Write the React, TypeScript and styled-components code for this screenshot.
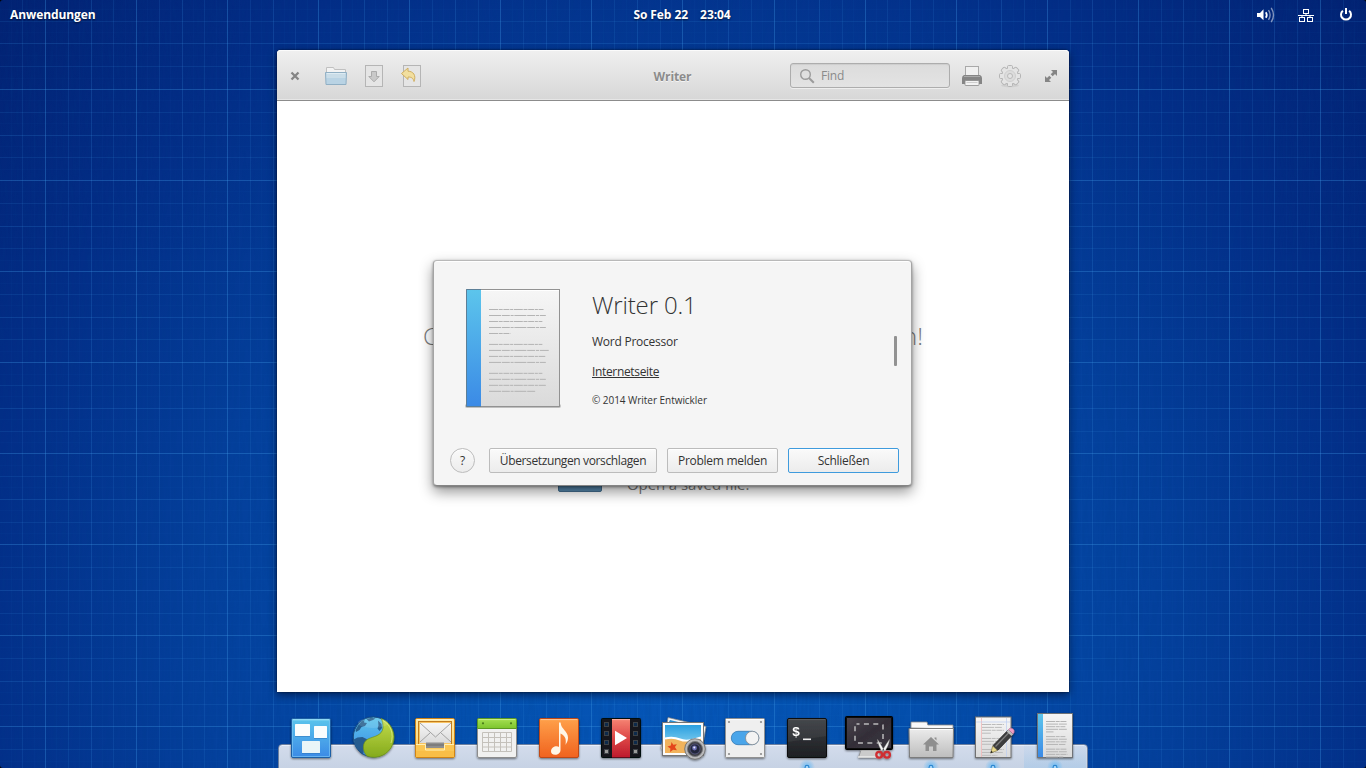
import React from 'react';
import styled, { createGlobalStyle } from 'styled-components';

const GlobalStyle = createGlobalStyle`
  * { box-sizing: border-box; }
  html, body { margin: 0; background: #000; }
  body { font-family: "Open Sans", "Noto Sans", sans-serif; font-size: 12px; overflow: hidden; }
  svg { display: block; flex: none; }
`;

/* ---------- Desktop ---------- */

const GRID = 91.07;

const Desktop = styled.main`
  display: flex;
  flex-direction: column;
  width: 1366px;
  height: 768px;
  position: relative;
  overflow: hidden;
  border-radius: 3px;
  background: radial-gradient(ellipse 820px 860px at 683px 660px, #0657ba 0%, #0450ae 25%, #043f9b 60%, #032d86 88%, #02206f 118%, #001560 145%);
`;

const Wallpaper = styled.svg`
  position: absolute;
  inset: 0;
`;

const Panel = styled.header`
  position: relative;
  display: grid;
  grid-template-columns: 1fr auto 1fr;
  align-items: center;
  height: 30px;
  padding: 0 12px 0 10px;
  color: #fff;
  font-weight: 700;
  line-height: 30px;
  text-shadow: 0 1px 2px rgba(0, 0, 0, 0.6);
`;

const PanelText = styled.span<{ $track?: number }>`
  letter-spacing: ${(p) => p.$track ?? 0}px;
  white-space: pre;
`;

const Indicators = styled.div`
  display: flex;
  justify-content: flex-end;
  gap: 24px;
  & > :first-child { margin-right: -2px; }
`;

function Grid() {
  const lines: React.ReactElement[] = [];
  const step = GRID / 8;
  const strength = (n: number) => {
    const m = ((n % 8) + 8) % 8;
    if (m === 0) return 0.33;
    if (m === 4) return 0.19;
    if (m % 2 === 0) return 0.13;
    return 0.035;
  };
  for (let n = -4; n < 120; n++) {
    const x = 45.5 + n * step;
    if (x > 1366) break;
    lines.push(<rect key={`v${n}`} x={Math.round(x - 0.5)} y="0" width="1" height="768" fill="#3f9be8" opacity={strength(n)} />);
  }
  for (let n = -8; n < 70; n++) {
    const y = 89.5 + n * step;
    if (y > 768) break;
    lines.push(<rect key={`h${n}`} x="0" y={Math.round(y - 0.5)} width="1366" height="1" fill="#3f9be8" opacity={strength(n)} />);
  }
  return (
    <Wallpaper width="1366" height="768">
      <filter id="weave" x="0" y="0" width="100%" height="100%">
        <feTurbulence type="fractalNoise" baseFrequency="0.35 0.04" numOctaves="2" seed="4" />
        <feColorMatrix values="0 0 0 0 0  0 0 0 0 0.05  0 0 0 0 0.25  0.9 0 0 0 -0.36" />
      </filter>
      <rect width="1366" height="768" filter="url(#weave)" opacity="0.35" />
      {lines}
    </Wallpaper>
  );
}

/* ---------- Writer window ---------- */

const Window = styled.section`
  position: relative;
  width: 792px;
  height: 642px;
  margin: 20px 0 0 277px;
  display: flex;
  flex-direction: column;
  background: #fff;
  border-radius: 4px 4px 0 0;
  box-shadow: 0 0 2px rgba(0, 0, 0, 0.7), 0 3px 8px rgba(0, 0, 20, 0.55);
`;

const Toolbar = styled.div`
  display: flex;
  align-items: center;
  height: 51px;
  flex: none;
  padding: 2px 11px 0 13px;
  border-bottom: 1px solid #8c8c8c;
  border-radius: 4px 4px 0 0;
  background: linear-gradient(#f0f0f0, #d7d7d7);
  box-shadow: inset 0 1px #fbfbfb, inset 0 -1px #e6e6e6;
`;

const ToolGroup = styled.div<{ $gap: number; $left?: number }>`
  display: flex;
  align-items: center;
  gap: ${(p) => p.$gap}px;
  margin-left: ${(p) => p.$left ?? 0}px;
`;

const WindowTitle = styled.h1`
  flex: 1;
  margin: 0;
  padding-left: 133px;
  text-align: center;
  font-size: 12px;
  font-weight: 700;
  letter-spacing: -0.1px;
  color: #8b8b8b;
  text-shadow: 0 1px #f4f4f4;
`;

const SearchBox = styled.div`
  display: flex;
  align-items: center;
  gap: 6px;
  width: 160px;
  height: 25px;
  margin-bottom: 1px;
  padding-left: 8px;
  border: 1px solid #adadad;
  border-radius: 3px;
  background: linear-gradient(#dcdcdc, #e3e3e3);
  box-shadow: inset 0 1px 1px rgba(0, 0, 0, 0.07), 0 1px rgba(255, 255, 255, 0.5);
  color: #8a8a8a;
  letter-spacing: -0.2px;
`;

const Document = styled.div`
  flex: 1;
  display: flex;
  flex-direction: column;
  color: #7a7a7a;
`;

const Welcome = styled.h2`
  display: flex;
  justify-content: space-between;
  width: 500px;
  margin: 218px 0 0 146px;
  font-size: 24px;
  font-weight: 300;
  line-height: 33px;
`;

const WelcomeRow = styled.div`
  display: flex;
  align-items: flex-end;
  gap: 25px;
  margin: 91px 0 0 281px;
  height: 50px;
  font-size: 15px;
  line-height: 18px;
  letter-spacing: -0.1px;
`;

const WelcomeFolder = styled.span`
  width: 44px;
  height: 40px;
  margin-bottom: 1px;
  border: 1px solid #456f90;
  border-radius: 2px;
  background: #5689ae;
`;

/* ---------- About dialog ---------- */

const Dialog = styled.section`
  position: absolute;
  left: 433px;
  top: 260px;
  width: 479px;
  height: 226px;
  display: flex;
  flex-direction: column;
  background: #f5f5f5;
  border: 1px solid #a6a6a6;
  border-color: #b9b9b9 #a4a4a4 #858585;
  border-radius: 4px;
  box-shadow: inset 0 1px #fff, 0 1px 3px rgba(0, 0, 0, 0.4), 0 6px 14px rgba(0, 0, 0, 0.42);
  color: #333;
`;

const DialogBody = styled.div`
  display: flex;
  flex: 1;
  padding: 25px 14px 0 28px;
`;

const AppInfo = styled.div`
  display: flex;
  flex-direction: column;
  align-items: flex-start;
  flex: 1;
  margin-left: 27px;
`;

const AppName = styled.h2`
  margin: 2px 0 0;
  font-size: 24px;
  font-weight: 300;
  line-height: 34px;
  letter-spacing: -0.15px;
`;

const InfoLine = styled.span<{ $top: number; $small?: boolean; $link?: boolean }>`
  margin-top: ${(p) => p.$top}px;
  font-size: ${(p) => (p.$small ? 10 : 12)}px;
  line-height: 16px;
  letter-spacing: ${(p) => (p.$small ? -0.04 : p.$link ? -0.34 : -0.24)}px;
  text-decoration: ${(p) => (p.$link ? 'underline' : 'none')};
`;

const ScrollThumb = styled.span`
  width: 3px;
  height: 30px;
  margin-top: 50px;
  border-radius: 1px;
  background: #929292;
`;

const DialogActions = styled.footer`
  display: flex;
  align-items: center;
  gap: 10px;
  height: 25px;
  margin: 0 12px 12px 16px;
`;

const Button = styled.button<{ $w: number; $primary?: boolean; $round?: boolean; $track?: number }>`
  width: ${(p) => p.$w}px;
  height: 25px;
  padding: 0 0 1px;
  margin-right: ${(p) => (p.$round ? 4 : 0)}px;
  border: 1px solid ${(p) => (p.$primary ? '#3f9bdd' : '#bcbcbc')};
  border-radius: ${(p) => (p.$round ? '50%' : '2px')};
  background: linear-gradient(#fafafa, #ececec);
  box-shadow: inset 0 1px #fff;
  color: #333;
  font: inherit;
  font-size: 12px;
  letter-spacing: ${(p) => p.$track ?? -0.28}px;
  white-space: nowrap;
`;

/* ---------- Dock ---------- */

const Dock = styled.nav`
  position: relative;
  display: flex;
  width: 808px;
  height: 60px;
  margin: 16px 0 0 279px;
  padding: 0 1px;
  &::before {
    content: '';
    position: absolute;
    inset: 36px -1px -4px;
    border: 1px solid #6c7f9f;
    border-radius: 4px 4px 0 0;
    background: linear-gradient(#d3dcec, #c5d1e3);
    box-shadow: inset 0 1px #e9effa;
  }
`;

const DockItem = styled.div<{ $active?: boolean }>`
  position: relative;
  width: 62px;
  height: 60px;
  background: ${(p) => (p.$active ? 'linear-gradient(rgba(160,200,240,.1), rgba(150,195,235,.4)) 0 37px / 100% 23px no-repeat' : 'none')};
`;

/* ---------- Icons ---------- */

const HiddenDefs = styled.svg`
  position: absolute;
`;

const Defs = () => (
  <HiddenDefs width="0" height="0">
    <defs>
      <linearGradient id="gBlue" x2="0" y2="1"><stop stopColor="#5cc5ec" /><stop offset="1" stopColor="#3b8ae6" /></linearGradient>
      <linearGradient id="gPaper" x2="0" y2="1"><stop stopColor="#f6f6f6" /><stop offset="1" stopColor="#dadada" /></linearGradient>
      <linearGradient id="gGold" x2="0" y2="1"><stop stopColor="#ffe9a3" /><stop offset=".5" stopColor="#ffe08a" /><stop offset="1" stopColor="#f8b93b" /></linearGradient>
      <linearGradient id="gOrange" x2="0" y2="1"><stop stopColor="#ffa14a" /><stop offset="1" stopColor="#f0621f" /></linearGradient>
      <linearGradient id="gRed" x2="0" y2="1"><stop stopColor="#f58373" /><stop offset=".5" stopColor="#dd4646" /><stop offset="1" stopColor="#bd1a2c" /></linearGradient>
      <linearGradient id="gGreen" x2="0" y2="1"><stop stopColor="#a5e052" /><stop offset="1" stopColor="#7dc52f" /></linearGradient>
      <linearGradient id="gLeaf" x2="0" y2="1"><stop stopColor="#c3dc4a" /><stop offset="1" stopColor="#84aa1c" /></linearGradient>
      <linearGradient id="gDark" x2="0" y2="1"><stop stopColor="#3a3d42" /><stop offset="1" stopColor="#1e2023" /></linearGradient>
      <linearGradient id="gSky" x2="0" y2="1"><stop stopColor="#2a9fe0" /><stop offset="1" stopColor="#a7e2f5" /></linearGradient>
      <linearGradient id="gGray" x2="0" y2="1"><stop stopColor="#ececec" /><stop offset="1" stopColor="#bdbdbd" /></linearGradient>
      <linearGradient id="gScreen" x2="1" y2="1"><stop stopColor="#4a444d" /><stop offset=".5" stopColor="#332e38" /><stop offset="1" stopColor="#3b3640" /></linearGradient>
      <radialGradient id="gGlow"><stop stopColor="#5fb7f5" stopOpacity=".9" /><stop offset="1" stopColor="#5fb7f5" stopOpacity="0" /></radialGradient>
      <filter id="soft" x="-30%" y="-30%" width="160%" height="160%"><feDropShadow dx="0" dy="1" stdDeviation="1" floodOpacity=".5" /></filter>
    </defs>
  </HiddenDefs>
);

const TextRows = ({ x, y, w, step, sw, groups, color = '#aaa' }: { x: number; y: number; w: number; step: number; sw: number; groups: number[][]; color?: string }) => {
  let cy = y;
  const out: React.ReactElement[] = [];
  groups.forEach((g, gi) => {
    g.forEach((f, i) => {
      out.push(<line key={`${gi}-${i}`} x1={x} x2={x + w * f} y1={cy} y2={cy} stroke={color} strokeWidth={sw} strokeDasharray={i % 2 ? '12 .8 8 .8 3 .8' : '9 .7 4 .7 6 .7 3 .7'} />);
      cy += step;
    });
    cy += step * 0.82;
  });
  return <g>{out}</g>;
};

const dockArt: React.ReactElement[] = [
  <g key="tiles">
    <rect x="11.5" y="10.5" width="39" height="39" rx="1.5" fill="url(#gBlue)" stroke="#1f5ea5" />
    <path d="M12.5 11.8h37" stroke="#a5e3fa" />
    <path d="M12.500 12v36.500h37V12" fill="none" stroke="#79c4f4" strokeWidth=".7" />
    <g fill="#2c73b8" opacity=".5"><rect x="15" y="17" width="15" height="12" /><rect x="34" y="19" width="13" height="12" /><rect x="22" y="34" width="18" height="12" /></g>
    <g fill="#fbfdfd"><rect x="15" y="16" width="15" height="12" rx=".6" /><rect x="34" y="18" width="13" height="12" rx=".6" /><rect x="22" y="33" width="18" height="12" rx=".6" fill="#e9f5f8" /></g>
  </g>,
  <g key="globe">
    <circle cx="31.300" cy="29" r="20" fill="url(#gBlue)" stroke="#1c4d80" />
    <path d="M13.500 22q2-5 6-8.500l3-1.500-.5 2.500 3 .5-2 3-3.500 1-2 3-3.500 2zM24.500 11l5-1.200 4 .8-2.500 1.500-4 1.500zM15.500 29.500l5-.5 5 2.500 1 3-4.500 4.500-.5 6-1 1.500Q13.500 41 11.800 31.500zM36 12.500l3.500 3.500.5 4-2.500 3-2-2.500 1-3z" fill="#21507f" opacity=".85" />
    <path d="M39 10.500A20 20 0 0 1 25 48C20 43 20 34 26 31c5-2.500 14-3 15-11 .2-4-.5-7-2-9.500z" fill="url(#gLeaf)" stroke="#6d8f17" strokeWidth=".7" />
    <path d="M41 12.500C49 17 52 26 49 35" fill="none" stroke="#dcec82" strokeWidth=".8" />
    <ellipse cx="31" cy="15" rx="15" ry="5" fill="#fff" opacity=".12" />
  </g>,
  <g key="mail">
    <rect x="11.500" y="10.500" width="39" height="39" rx="1.500" fill="url(#gGold)" stroke="#cf8419" />
    <path d="M12.500 11.700h37" stroke="#fff4cb" />
    <rect x="14.500" y="13.500" width="33" height="23" fill="#f7c463" stroke="#c27c1c" />
    <rect x="16" y="15" width="31" height="20" fill="url(#gPaper)" />
    <path d="M16 15l15.500 14L47 15M16 34l10-9M47 34l-10-9" fill="none" stroke="#9b9b9b" strokeWidth=".9" />
    <path d="M12 36h10v5h18v-5h10v13H12z" fill="#fbc653" />
    <path d="M12 36.500h9.500v5.500h19v-5.500H50" fill="none" stroke="#fff0b5" />
    <path d="M12 43h38v6H12z" fill="#f8b63b" opacity=".5" />
    <rect x="22" y="34.500" width="18" height="5.500" fill="#8e8e8e" /><path d="M22 37h18" stroke="#6c6c6c" />
  </g>,
  <g key="calendar">
    <rect x="11.500" y="10.500" width="39" height="39" rx="1.500" fill="#f1f1f0" stroke="#8d8d8d" />
    <path d="M11.500 20.500V12q0-1.500 1.500-1.500h36q1.500 0 1.500 1.500v8.500z" fill="url(#gGreen)" stroke="#5c9a21" />
    <path d="M12.500 11.600h37" stroke="#c9f08d" />
    <circle cx="17" cy="15.300" r="1.100" fill="#4a7d19" /><circle cx="45" cy="15.300" r="1.100" fill="#4a7d19" />
    <path d="M16.500 24.500h29v19h-29zM16.500 29.500h29M16.500 34.500h29M16.500 39h29M22.500 24.500v19M28.500 24.500v19M34.500 24.500v19M40.500 24.500v19" fill="none" stroke="#c4c1bb" />
  </g>,
  <g key="music">
    <rect x="11.500" y="10.500" width="39" height="39" rx="1.500" fill="url(#gOrange)" stroke="#bf4a14" />
    <path d="M12.500 11.600h37" stroke="#ffc795" />
    <path d="M31 14.500h1.600c.5 7 7.400 8.500 7.400 15 0 4-1.500 5.500-2.500 7.500.8-5 .5-9-5-11.500V42c0 3-2.500 4.800-5.300 4.800s-4.400-1.600-4.200-3.800c.2-2.800 3-4.800 5.500-4.800 1.200 0 2 .3 2.500.7z" fill="#fff6e6" />
  </g>,
  <g key="video">
    <rect x="11.500" y="10.500" width="39" height="39" rx="1" fill="#17191b" stroke="#060708" />
    <rect x="22" y="11" width="18" height="38.500" fill="url(#gRed)" />
    <path d="M22 11.600h18" stroke="#ffb0a1" />
    <g stroke="#3e4347" fill="#0c2c4b"><rect x="14.500" y="14.500" width="4" height="4" /><rect x="14.500" y="23.500" width="4" height="4" /><rect x="14.500" y="32.500" width="4" height="4" /><rect x="14.500" y="41.500" width="4" height="4" fill="#9a9a9a" /><rect x="43.500" y="14.500" width="4" height="4" /><rect x="43.500" y="23.500" width="4" height="4" /><rect x="43.500" y="32.500" width="4" height="4" /><rect x="43.500" y="41.500" width="4" height="4" fill="#9a9a9a" /></g>
    <path d="M25 22.700L37 30 25 37.300z" fill="#fff" />
  </g>,
  <g key="photos">
    <path d="M16 9.500l38 9-5 28-38-3z" fill="#f6f6f6" stroke="#838383" strokeWidth=".7" />
    <path d="M18 12l33 8-1 5-34-9z" fill="#2a8ed0" />
    <path d="M9 41l4-24 38 4-4 26z" fill="#eee" stroke="#777" strokeWidth=".6" />
    <rect x="10.500" y="14.500" width="41" height="33" fill="#fbfbfb" stroke="#757575" />
    <rect x="13" y="17" width="36" height="28" fill="url(#gSky)" />
    <path d="M13 31q8-2 15 1t21-2v15H13z" fill="#f1b35c" />
    <path d="M13 30.500q8-2 15 1t21-2" fill="none" stroke="#fff" strokeWidth="2" />
    <path d="M19.500 34l1.800 2.700 3.600-.5-2 2.800 2 3.200-3.800-.4-3 2.200.3-3.600-3-1.900 3.500-1z" fill="#e4451b" />
    <circle cx="43" cy="41" r="10.300" fill="#b9b9bb" stroke="#666" strokeWidth=".8" />
    <circle cx="43" cy="41" r="7.500" fill="#3f4047" stroke="#77777a" />
    <circle cx="43" cy="41" r="5" fill="#23253a" stroke="#65659a" strokeWidth=".6" /><circle cx="42.500" cy="40" r="2.400" fill="#6a6db2" /><circle cx="42.300" cy="39.500" r="1" fill="#e8e9ff" />
  </g>,
  <g key="settings">
    <rect x="11.500" y="10.500" width="39" height="39" rx="1" fill="#efefef" stroke="#919191" />
    <path d="M12 11.600h38" stroke="#fff" />
    <g fill="#8d8d8d"><circle cx="15" cy="14" r="1.100" /><circle cx="47" cy="14" r="1.100" /><circle cx="15" cy="46" r="1.100" /><circle cx="47" cy="46" r="1.100" /></g>
    <rect x="17.300" y="23.300" width="27.500" height="13.400" rx="6.700" fill="#4aa5ea" stroke="#3079b5" strokeWidth=".8" />
    <circle cx="38.200" cy="30" r="6.700" fill="#f3f3f3" stroke="#84888d" strokeWidth=".8" />
  </g>,
  <g key="terminal">
    <rect x="11.500" y="10.500" width="39" height="39" rx="1.500" fill="url(#gDark)" stroke="#0c0d0f" />
    <path d="M12.500 11.600h37" stroke="#666" strokeWidth=".8" />
    <path d="M12 12h38v16L12 34z" fill="#fff" opacity=".05" />
    <text x="16" y="27.500" fontFamily="Liberation Mono" fontWeight="700" fontSize="13.500" fill="#fff">$</text>
    <rect x="27" y="30.500" width="8" height="1.600" fill="#eee" />
  </g>,
  <g key="screenshot">
    <path d="M23 42h17l3 7.500H20.500z" fill="#cbcbcb" stroke="#858585" strokeWidth=".7" /><path d="M20 49h24" stroke="#f1f1f1" strokeWidth="1.300" />
    <rect x="7.500" y="8.500" width="47" height="33" rx="1" fill="#0d0d0e" stroke="#000" />
    <rect x="9" y="10" width="44" height="30" fill="url(#gScreen)" />
    <rect x="17" y="16" width="28" height="19" rx="1.500" fill="none" stroke="#b9b9ba" strokeWidth="1.500" strokeDasharray="5 4.400" strokeDashoffset="2" />
    <path d="M39.300 31q3 4 7.500 12.500l-2 1.700Q40 38 39.300 31zM51.700 31q-3 4-8 12.500l2 1.700Q51 38 51.700 31z" fill="#f5f5f5" stroke="#666" strokeWidth=".4" />
    <circle cx="41.200" cy="46.800" r="2.900" fill="none" stroke="#cf2e33" strokeWidth="2.300" /><circle cx="49" cy="46.800" r="2.900" fill="none" stroke="#cf2e33" strokeWidth="2.300" />
  </g>,
  <g key="files">
    <path d="M11 20v-5.500q0-.500.500-.500h15.500l.8 3H53v4z" fill="#fafafa" stroke="#888" strokeWidth=".8" />
    <path d="M9 20.500h44.500l-.5 29H9.500z" fill="url(#gGray)" stroke="#7c7c7c" />
    <path d="M10 21.500h42.500" stroke="#fff" />
    <path d="M31 29l8 7.500h-2.500V43H33v-4.500h-4V43h-3.500v-6.500H23zM34.500 29.500h2v3l-2-2z" fill="#8f8f8f" />
  </g>,
  <g key="editor">
    <rect x="13.500" y="9" width="35.500" height="40.500" fill="url(#gPaper)" stroke="#727272" />
    <path d="M19.500 10v39" stroke="#f1b6b6" strokeWidth=".8" /><path d="M44.500 10v39M14 14h34" stroke="#bbcdf0" strokeWidth=".7" />
    <TextRows x={20} y={16.500} w={22} step={2.900} sw={1} groups={[[1, 0.9, 1, 0.4], [0.9, 1, 0.9], [1, 0.95, 0.7]]} color="#bbb" />
    <path d="M28.700 45l2-7 4.800 4.500z" fill="#ead98c" stroke="#6b6228" strokeWidth=".6" /><path d="M28.500 45.300l.8-2.500 1.600 1.500z" fill="#222" />
    <path d="M31 37.500L46 22l5 4.500-15 15.700z" fill="#3c3c3c" stroke="#202020" strokeWidth=".6" /><path d="M33.500 38.500l14-14.500" stroke="#7c7c7c" strokeWidth="1.300" />
    <path d="M44.500 23.500l2-2 5 4.500-2 2z" fill="#bcbcbc" /><path d="M46.500 21.500q1.500-2.500 4-1t1.500 4.300l-1 1.200z" fill="#ef9fc6" stroke="#a1567d" strokeWidth=".5" />
  </g>,
  <g key="writer">
    <rect x="13.500" y="5.500" width="35" height="44" fill="url(#gPaper)" stroke="#6f7377" />
    <rect x="14" y="6" width="5" height="43" fill="url(#gBlue)" />
    <TextRows x={22} y={13.500} w={21.500} step={2.600} sw={1} groups={[[0.95, 1, 0.9, 1, 0.35], [0.9, 1, 0.95, 0.9], [0.95, 1, 1, 0.8]]} color="#b4b4b4" />
  </g>,
];

function VolumeIcon() {
  return (
    <svg width="20" height="18" viewBox="0 0 20 18">
      <path d="M1 7h3l3.500-3.700v11L4 11H1z" fill="#fff" />
      <path d="M9.800 6.200q2 2.800 0 5.600" fill="none" stroke="#fff" strokeWidth="1.700" />
      <path d="M12.500 4.200q3.200 4.800 0 9.600M15.200 1.800q4.600 7.200 0 14.400" fill="none" stroke="#fff" strokeOpacity=".5" strokeWidth="1.400" />
    </svg>
  );
}

function NetworkIcon() {
  return (
    <svg width="16" height="18" viewBox="0 0 16 18" fill="none" stroke="#fff">
      <rect x="5.500" y="3.500" width="5" height="4" /><rect x="1.500" y="11.500" width="5" height="4" /><rect x="9.500" y="11.500" width="5" height="4" />
      <path d="M0 9.500h16M8 7.500v2M4 9.500v2M12 9.500v2" />
    </svg>
  );
}

function PowerIcon() {
  return (
    <svg width="16" height="18" viewBox="0 0 16 18" fill="none" stroke="#fff" strokeWidth="2">
      <path d="M4.900 4.700a5 5 0 1 0 6.200 0M8 2v6" />
    </svg>
  );
}

function FolderIcon() {
  return (
    <svg width="24" height="22" viewBox="0 0 24 22">
      <path d="M2.500 8V2.500h7l1 2h11V8" fill="#f3f3f3" stroke="#c0c0c0" />
      <path d="M1.500 7.500h21l-.5 12H2z" fill="#b9d3e4" stroke="#90afc4" /><path d="M2.500 8.500h19" stroke="#deebf2" /><path d="M2.500 9h19v4h-19z" fill="#d1e1ea" opacity=".7" />
    </svg>
  );
}

function SaveIcon() {
  return (
    <svg width="20" height="24" viewBox="0 0 20 24">
      <rect x="1.500" y="1.500" width="17" height="21" fill="#e5e5e5" stroke="#b5b5b5" />
      <path d="M7.500 7.500h5v5h2.700L10 17.800 4.800 12.500h2.700z" fill="#c9c9c9" stroke="#ababab" />
    </svg>
  );
}

function RevertIcon() {
  return (
    <svg width="22" height="24" viewBox="0 0 22 24">
      <rect x="3.500" y="1.500" width="17" height="21" fill="#e5e5e5" stroke="#b5b5b5" />
      <path d="M1.500 9.500L8 4v3.200c5 0 8.500 4 6 10.300-.8-3.500-2.500-4.500-6-4.500v2.500z" fill="#f2df9f" stroke="#d0ae5f" />
    </svg>
  );
}

function SearchIcon() {
  return (
    <svg width="16" height="16" viewBox="0 0 16 16" fill="none" stroke="#9b9b9b">
      <circle cx="6.500" cy="6.500" r="4.800" strokeWidth="1.400" /><path d="M10 10l4.800 4.800" strokeWidth="2" />
    </svg>
  );
}

function PrinterIcon() {
  return (
    <svg width="22" height="22" viewBox="0 0 22 22">
      <rect x="4.500" y="1.500" width="13" height="11" fill="#f0f0f0" stroke="#a9a9a9" />
      <path d="M3 10h16q2 1 2 3v6H1v-6q0-2 2-3z" fill="#858585" /><path d="M3 11.500h16" stroke="#a9a9a9" />
      <rect x="4" y="15.500" width="14" height="5" rx=".8" fill="#f2f2f2" stroke="#8a8a8a" strokeWidth=".8" /><path d="M5.500 17.500h11" stroke="#cecece" />
    </svg>
  );
}

function GearIcon() {
  const teeth = Array.from({ length: 8 }, (_, i) => i * 45);
  return (
    <svg width="24" height="24" viewBox="0 0 24 24">
      <ellipse cx="12" cy="21.500" rx="9" ry="1.800" fill="#000" opacity=".06" />
      <g fill="#e4e4e4" stroke="#b5b5b5">
        {teeth.map((a) => <rect key={a} x="9.500" y="1.500" width="5" height="5" rx="1.200" transform={`rotate(${a} 12 12)`} />)}
        <circle cx="12" cy="12" r="8.300" />
      </g>
      {teeth.map((a) => <rect key={a} x="10" y="2.300" width="4" height="4" fill="#e4e4e4" transform={`rotate(${a} 12 12)`} />)}
      <circle cx="12" cy="12" r="5.500" fill="#dcdcdc" stroke="#cfcfcf" /><circle cx="12" cy="12" r="2.500" fill="#e5e5e5" stroke="#b9b9b9" />
    </svg>
  );
}

function AboutIcon() {
  return (
    <svg width="103" height="126" viewBox="0 0 103 126">
      <rect x="3" y="118" width="96" height="4" rx="2" fill="#000" opacity=".22" />
      <rect x="4.500" y="3.500" width="93" height="117" fill="url(#gPaper)" stroke="#929292" />
      <path d="M19 4.500h78" stroke="#fff" />
      <rect x="4.500" y="3.500" width="14.500" height="117" fill="url(#gBlue)" />
      <path d="M19 3.500H4.500v117H19" fill="none" stroke="#5c7f98" />
      <TextRows x={27} y={23.500} w={58} step={6} sw={1} groups={[[0.94, 0.98, 0.92, 0.98, 0.37], [0.92, 1.03, 0.97, 0.98], [0.92, 0.98, 0.98, 0.8]]} color="#b4b4b4" />
    </svg>
  );
}

export default function App() {
  return (
    <>
      <GlobalStyle />
      <Defs />
      <Desktop>
        <Grid />
        <Panel>
          <PanelText $track={-0.1}>Anwendungen</PanelText>
          <PanelText $track={-0.08}>So Feb 22{'   '} 23:04</PanelText>
          <Indicators><VolumeIcon /><NetworkIcon /><PowerIcon /></Indicators>
        </Panel>

        <Window>
          <Toolbar>
            <svg width="10" height="10" viewBox="0 0 10 10"><path d="M1.500 1.500l7 7M8.500 1.500l-7 7" stroke="#858585" strokeWidth="2.300" /></svg>
            <ToolGroup $gap={16} $left={24}><FolderIcon /><SaveIcon /><RevertIcon /></ToolGroup>
            <WindowTitle>Writer</WindowTitle>
            <SearchBox><SearchIcon />Find</SearchBox>
            <ToolGroup $gap={15} $left={11}><PrinterIcon /><GearIcon /></ToolGroup>
            <ToolGroup $gap={0} $left={22}>
              <svg width="14" height="14" viewBox="0 0 14 14" fill="#858585"><path d="M7 1h6v6l-2-2-2.300 2.300-2-2L9 3zM1 7l2 2 2.300-2.300 2 2L5 11l2 2H1z" /></svg>
            </ToolGroup>
          </Toolbar>
          <Document>
            <Welcome><span>C</span><span>n!</span></Welcome>
            <WelcomeRow><WelcomeFolder /><span>Open a saved file.</span></WelcomeRow>
          </Document>
        </Window>

        <Dock>
          {dockArt.map((art, i) => (
            <DockItem key={i} $active={i === 12}>
              <svg width="62" height="60" viewBox="0 0 62 60">
                <g filter="url(#soft)">{art}</g>
                {(i === 8 || i >= 10) && (<><circle cx="31" cy="59" r="8" fill="url(#gGlow)" /><circle cx="31" cy="59.300" r="1.900" fill="#a9d8fb" stroke="#2b86cf" strokeWidth="1.100" /></>)}
              </svg>
            </DockItem>
          ))}
        </Dock>

        <Dialog>
          <DialogBody>
            <AboutIcon />
            <AppInfo>
              <AppName>Writer 0.1</AppName>
              <InfoLine $top={12}>Word Processor</InfoLine>
              <InfoLine $top={14} $link>Internetseite</InfoLine>
              <InfoLine $top={12} $small>© 2014 Writer Entwickler</InfoLine>
            </AppInfo>
            <ScrollThumb />
          </DialogBody>
          <DialogActions>
            <Button $w={25} $round>?</Button>
            <Button $w={168} $track={-0.38}>Übersetzungen vorschlagen</Button>
            <Button $w={111}>Problem melden</Button>
            <Button $w={111} $primary>Schließen</Button>
          </DialogActions>
        </Dialog>
      </Desktop>
    </>
  );
}
